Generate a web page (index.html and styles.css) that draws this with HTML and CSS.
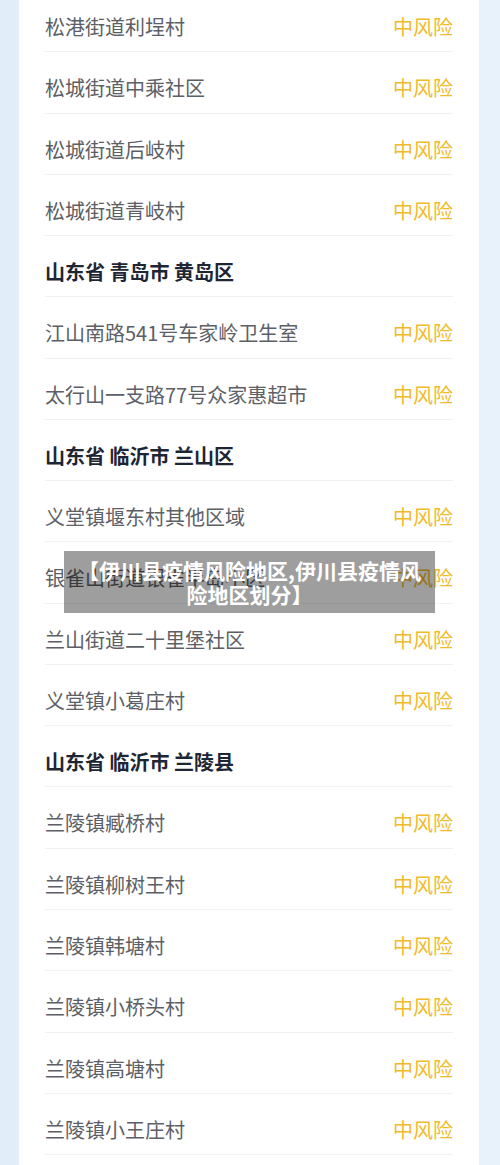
FILE: index.html
```html
<!DOCTYPE html>
<html lang="zh-CN">
<head>
  <meta charset="UTF-8" />
  <meta name="viewport" content="width=device-width, initial-scale=1.0"/>
  <title>伊川县疫情风险地区,伊川县疫情风险地区划分</title>
  <link rel="stylesheet" href="styles.css">
</head>
<body>
  <div class="card">
    <div class="row"><span class="place">松港街道利埕村</span><span class="risk">中风险</span></div>
    <div class="row"><span class="place">松城街道中乘社区</span><span class="risk">中风险</span></div>
    <div class="row"><span class="place">松城街道后岐村</span><span class="risk">中风险</span></div>
    <div class="row"><span class="place">松城街道青岐村</span><span class="risk">中风险</span></div>
    <div class="row region">山东省 青岛市 黄岛区</div>
    <div class="row"><span class="place">江山南路541号车家岭卫生室</span><span class="risk">中风险</span></div>
    <div class="row"><span class="place">太行山一支路77号众家惠超市</span><span class="risk">中风险</span></div>
    <div class="row region">山东省 临沂市 兰山区</div>
    <div class="row"><span class="place">义堂镇堰东村其他区域</span><span class="risk">中风险</span></div>
    <div class="row"><span class="place">银雀山街道银雀半岛小区</span><span class="risk">中风险</span></div>
    <div class="row"><span class="place">兰山街道二十里堡社区</span><span class="risk">中风险</span></div>
    <div class="row"><span class="place">义堂镇小葛庄村</span><span class="risk">中风险</span></div>
    <div class="row region">山东省 临沂市 兰陵县</div>
    <div class="row"><span class="place">兰陵镇臧桥村</span><span class="risk">中风险</span></div>
    <div class="row"><span class="place">兰陵镇柳树王村</span><span class="risk">中风险</span></div>
    <div class="row"><span class="place">兰陵镇韩塘村</span><span class="risk">中风险</span></div>
    <div class="row"><span class="place">兰陵镇小桥头村</span><span class="risk">中风险</span></div>
    <div class="row"><span class="place">兰陵镇高塘村</span><span class="risk">中风险</span></div>
    <div class="row"><span class="place">兰陵镇小王庄村</span><span class="risk">中风险</span></div>
  </div>

  <div class="caption">【伊川县疫情风险地区,伊川县疫情风险地区划分】</div>
</body>
</html>
```

FILE: styles.css
```css
body {
  margin: 0;
  height: 1165px;
  overflow: hidden;
  position: relative;
  font-family: "Noto Sans CJK SC", "Noto Sans", sans-serif;
  background: linear-gradient(to right, #e1edf8, #e8f2fb);
}

.card {
  margin: 0 21px 0 19px;
  padding: 0 26px;
  background-color: #ffffff;
  min-height: 1165px;
}

.row {
  display: flex;
  justify-content: space-between;
  padding: 22px 0 10.28px;
  line-height: 28px;
  font-size: 20px;
  border-bottom: 1px solid #f0f2f4;
}

.row:first-child {
  padding-top: 13px;
}

.place {
  color: #5c6066;
}

.risk {
  color: #f0ba2c;
}

.region {
  font-weight: bold;
  color: #1e2634;
}

.caption {
  position: absolute;
  top: 551px;
  left: 64px;
  width: 371px;
  box-sizing: border-box;
  padding: 7px 12px;
  background-color: rgba(0, 0, 0, 0.38);
  color: #ffffff;
  font-size: 21px;
  line-height: 24px;
  font-weight: bold;
  text-align: center;
}
```
